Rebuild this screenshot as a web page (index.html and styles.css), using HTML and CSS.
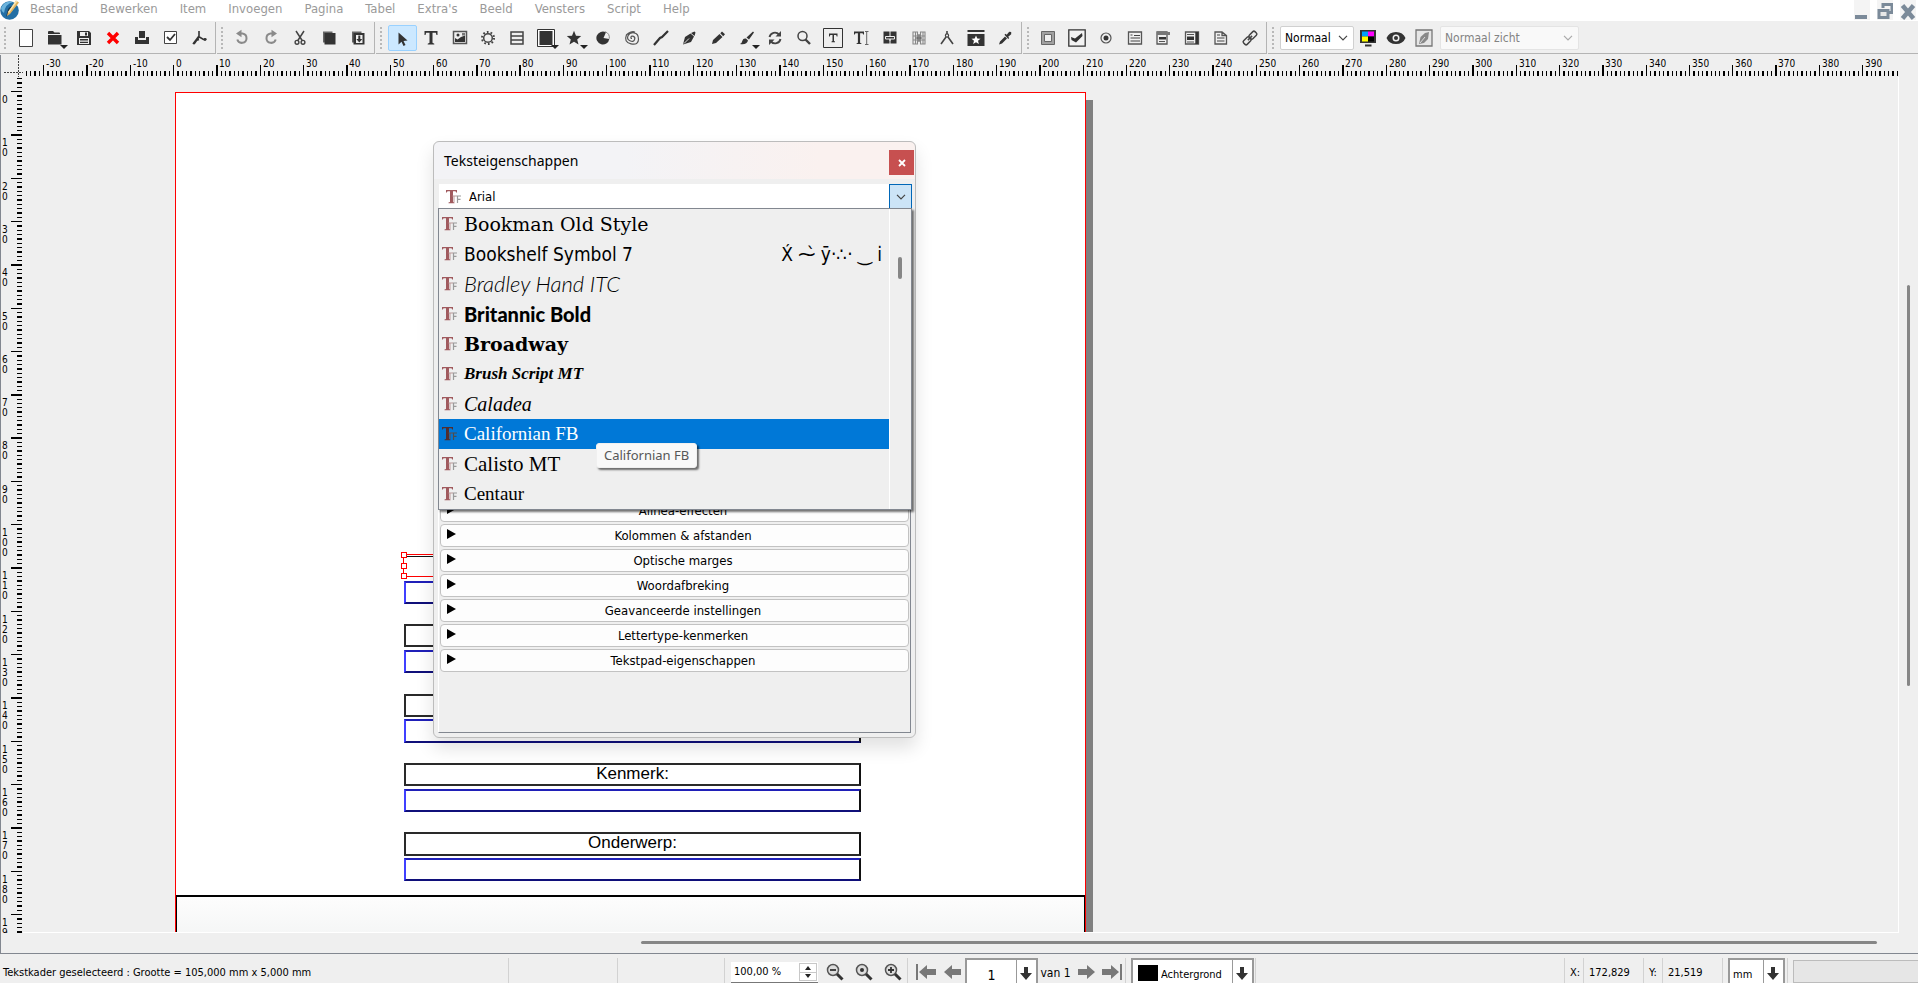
FILE: index.html
```html
<!DOCTYPE html>
<html lang="nl">
<head>
<meta charset="utf-8">
<title>Scribus</title>
<link rel="stylesheet" href="styles.css">
</head>
<body>
<svg class="defs" aria-hidden="true">
  <symbol id="new" viewBox="0 0 18 18"><path d="M2.5.5h13v17h-13z" fill="#fff" stroke="#444"/></symbol>
  <symbol id="open" viewBox="0 0 18 18"><path d="M2 3q0-1 1-1h4l1.500 1.500H13q1 0 1 1V5H2z"/><path d="M2 6h13.500v9.500H2z"/></symbol>
  <symbol id="save" viewBox="0 0 18 18"><path fill-rule="evenodd" d="M2 2h12l2 2v12H2zM5 3v4h8V3zM4 9v6h10V9z"/><path d="M10 3.500h2v3h-2zM5 10h8v1.500H5zM5 12.700h8V14H5z"/></symbol>
  <symbol id="close" viewBox="0 0 18 18"><path d="M4 4l10 10M14 4L4 14" stroke="#f00" stroke-width="3.400"/></symbol>
  <symbol id="print" viewBox="0 0 18 18"><path d="M6 2h6v7H6zM2 8h3v3h8V8h3v7H2z"/></symbol>
  <symbol id="check" viewBox="0 0 18 18"><path d="M2.500 2.500h12v12h-12z" fill="#fff" stroke="#444"/><path d="M5 8l3 3 5-6" fill="none" stroke="#333" stroke-width="1.800"/></symbol>
  <symbol id="pdf" viewBox="0 0 18 18"><path d="M8 2v5L2 15M8 8l-5 7M7.500 7.500l5 3 3-.2M8 10.500l-3 1" fill="none" stroke="#333" stroke-width="1.600"/><circle cx="14" cy="10.500" r="1.400"/></symbol>
  <symbol id="undo" viewBox="0 0 18 18"><path d="M6 4.500h3.500a4.700 4.700 0 1 1-5.200 6" fill="none" stroke="#8a8a8a" stroke-width="2"/><path d="M3 4.500L8.500.8v7.400z" fill="#8a8a8a"/></symbol>
  <symbol id="redo" viewBox="0 0 18 18"><path d="M12 4.500H8.500a4.700 4.700 0 1 0 5.200 6" fill="none" stroke="#8a8a8a" stroke-width="2"/><path d="M15 4.500L9.500.8v7.400z" fill="#8a8a8a"/></symbol>
  <symbol id="cut" viewBox="0 0 18 18"><path d="M5 2l6.500 10M13 2L6.500 12" fill="none" stroke="#444" stroke-width="1.500"/><circle cx="6" cy="13.300" r="1.900" fill="none" stroke="#444" stroke-width="1.400"/><circle cx="12" cy="13.300" r="1.900" fill="none" stroke="#444" stroke-width="1.400"/></symbol>
  <symbol id="copy" viewBox="0 0 18 18"><path d="M3 2.500h9.500v2H5v9H3z" fill="#666"/><path d="M4.500 4h11v11.500h-11z"/></symbol>
  <symbol id="paste" viewBox="0 0 18 18"><path d="M3 2.500h9.500v2H5v9H3z" fill="#666"/><path d="M4.500 4h11v11.500h-11z"/><path d="M7 6h6.500v8H7z" fill="#eee"/><path d="M9.300 6.500h2V10h2l-3 3.500-3-3.500h2z"/></symbol>
  <symbol id="select" viewBox="0 0 18 18"><path d="M5.500 3.500v12l3-2.800 2 4.300 2-1-2-4 4-.4z"/></symbol>
  <symbol id="text" viewBox="0 0 18 18"><path d="M2.500 2h13v4h-1l-.7-2.200h-3.300v10l1.800.9v.8H5.700v-.8l1.800-.9v-10H4.200L3.500 6h-1z"/></symbol>
  <symbol id="image" viewBox="0 0 18 18"><path d="M2.500 2.500h13v12h-13z" fill="none" stroke="#555" stroke-width="1.500"/><path d="M4 13V9l2.500 1.500L10 8l4-1.500V13z"/><circle cx="7" cy="6" r="1.500"/><path d="M11 4h3v2.500h-3z" fill="#777"/></symbol>
  <symbol id="gear" viewBox="0 0 18 18"><circle cx="9" cy="9" r="4.300" fill="none" stroke="#444" stroke-width="1.500"/><circle cx="9" cy="9" r="6" fill="none" stroke="#444" stroke-width="2" stroke-dasharray="1.700 2.070"/></symbol>
  <symbol id="table" viewBox="0 0 18 18"><path d="M3 3h12v12H3zM3 7h12M3 11h12" fill="none" stroke="#444" stroke-width="1.500"/></symbol>
  <symbol id="shape" viewBox="0 0 18 18"><path d="M.5.5h17v17H.5z" fill="#fff" stroke="#333"/><path d="M2.500 2h13v14h-13z"/></symbol>
  <symbol id="star" viewBox="0 0 18 18"><path d="M9 1.800l2 4.900 5.200.4-4 3.400 1.300 5.100L9 12.800l-4.500 2.800 1.300-5.100-4-3.400 5.200-.4z"/></symbol>
  <symbol id="arc" viewBox="0 0 18 18"><path d="M9.500 9L12 3.300A6.500 6.500 0 1 0 15.300 10z"/><path d="M11 2.700a6.500 6.500 0 0 1 4.300 7" fill="none" stroke="#888"/></symbol>
  <symbol id="spiral" viewBox="0 0 18 18"><path d="M9 9.500q-1.500 0-1-1.500t2.500-.6 1 3.400-4.500 1-2-5 6-3 4.500 6.500-7.500 4.500-4.500-9S9 1.500 12 3.200" fill="none" stroke="#555" stroke-width="1.200"/></symbol>
  <symbol id="line" viewBox="0 0 18 18"><path d="M2 16l6-7 2-1 6-6" fill="none" stroke="#333" stroke-width="2.200"/></symbol>
  <symbol id="pen" viewBox="0 0 18 18"><path d="M3 15.500L5 8l5.500-3.500 3.500 3-3 5.500zM11 4l3.500-1.500 1 1-1 3.500z"/><path d="M4 14.500l5-5" stroke="#ddd" fill="none"/></symbol>
  <symbol id="pencil" viewBox="0 0 18 18"><path d="M3 15l1-4 6.500-6 3 3L7 14zM11.300 4.300L13 2.500l3 2.800-1.800 1.900z"/></symbol>
  <symbol id="brush" viewBox="0 0 18 18"><path d="M2 15q2-1 2.500-3.500T8 9.500l2 2Q9 16 2 15zM8.500 8.500l6.500-6 1 1-5 7z"/></symbol>
  <symbol id="rotate" viewBox="0 0 18 18"><path d="M3.500 8A5.500 5.500 0 0 1 13 5.500M14.500 10A5.500 5.500 0 0 1 5 12.500" fill="none" stroke="#444" stroke-width="1.900"/><path d="M15 2v5.500h-5.500zM3 16v-5.500h5.500z" fill="#444"/></symbol>
  <symbol id="zoom" viewBox="0 0 18 18"><circle cx="7.500" cy="7" r="4.500" fill="none" stroke="#444" stroke-width="1.500"/><path d="M10.500 10.500l4.500 4.500" stroke="#444" stroke-width="2.400"/></symbol>
  <symbol id="edit" viewBox="0 0 20 20"><path d="M.5.500h19v19H.5z" fill="none" stroke="#333"/><path d="M6 5.500h8.500v3h-.8l-.5-1.500H11v6l1 .5v.7H8.500v-.7l1-.5V7H7.300l-.5 1.500H6z"/></symbol>
  <symbol id="story" viewBox="0 0 18 18"><path d="M2 2.500h10v3h-.8l-.6-1.300H8.100v9.600l1.400.6v.6h-5v-.6l1.400-.6V4.200H3.400L2.800 5.500H2z"/><path d="M13 2.500h3.500M13 15.500h3.500M14.700 2.500v13" stroke="#666" fill="none"/></symbol>
  <symbol id="link" viewBox="0 0 18 18"><path d="M2.500 2.500h6v12h-6zM9.500 2.500h6v12h-6z"/><path d="M4.500 7.500h9v2.500h-9z" fill="#333" stroke="#eee"/><path d="M8.500 10v2h1v-2z" fill="#eee"/></symbol>
  <symbol id="unlink" viewBox="0 0 18 18"><path d="M3 3h4.500v12H3zM10.500 3H15v12h-4.500zM3 7h12M3 11h12M5.500 3v12M13 3v12" fill="none" stroke="#888" stroke-width="1.100"/><path d="M9 5v8M6 9h6" stroke="#555"/></symbol>
  <symbol id="measure" viewBox="0 0 18 18"><path d="M9 2v3M8 8l-5 7M10 8l5 7" fill="none" stroke="#444" stroke-width="1.600"/><circle cx="9" cy="6.500" r="1.600" fill="none" stroke="#444" stroke-width="1.200"/></symbol>
  <symbol id="props" viewBox="0 0 18 18"><path d="M.5 1h17v2H.5zM.5 5h17v12H.5z"/><path d="M9 6.500l1.300 3 3.200.2-2.500 2 .9 3.300L9 13.200 6.100 15l.9-3.300-2.500-2 3.200-.2z" fill="#fff"/></symbol>
  <symbol id="dropper" viewBox="0 0 18 18"><path d="M3 15.500l1-3 5-5 2 2-5 5zM8.500 5.800l1-1 1.200 1 2.500-3 2 .2 0 2.200-3 2.500 1 1.200-1 1z"/></symbol>
  <symbol id="button" viewBox="0 0 18 18"><path d="M4 4h10v10H4z" fill="none" stroke="#a0a0a0" stroke-width="3"/><path d="M2.500 2.500h13v13h-13zM5.500 5.500h7v7h-7z" fill="none" stroke="#666"/></symbol>
  <symbol id="checkbox" viewBox="0 0 18 18"><path d="M.8.800h16.400v16.400H.8z" fill="#f3f3f3" stroke="#333" stroke-width="1.300"/><path d="M3 8l4 1.500L14 4l.5 3L8 13.500 3.500 11z"/></symbol>
  <symbol id="radio" viewBox="0 0 18 18"><circle cx="9" cy="9" r="5" fill="none" stroke="#555" stroke-width="1.200"/><circle cx="9" cy="9" r="2.500"/></symbol>
  <symbol id="field" viewBox="0 0 18 18"><path d="M2.500 3h13v12h-13z" fill="none" stroke="#555" stroke-width="1.300"/><path d="M4.500 6h2M8 6.500h6M4.500 9h9.500M4.500 12h9.500" stroke="#444" stroke-width="1.200"/></symbol>
  <symbol id="combo" viewBox="0 0 18 18"><path d="M3 3h10v12H3z" fill="none" stroke="#555" stroke-width="1.300"/><path d="M3 3h13v3H3z" fill="#777"/><path d="M5 8h7v2.500H5z"/><path d="M5 12.500h6" stroke="#555"/></symbol>
  <symbol id="list" viewBox="0 0 18 18"><path d="M2.500 3h13v12h-13z" fill="none" stroke="#555" stroke-width="1.300"/><path d="M4 7.500h7V11H4zM12.300 3h3v12h-3z"/><path d="M4 5.500h7M4 13h7" stroke="#555"/></symbol>
  <symbol id="note" viewBox="0 0 18 18"><path d="M3 3h7l4.500 3.500V15H3zM10 3v3.500h4.500" fill="none" stroke="#555" stroke-width="1.300"/><path d="M5 6h3M5 9h7.500M5 12h7.500" stroke="#444" stroke-width="1.200"/></symbol>
  <symbol id="chain" viewBox="0 0 18 18"><g fill="none" stroke="#444" stroke-width="1.500" transform="rotate(-45 9 9)"><rect x="1" y="6.500" width="8" height="5" rx="1.500"/><rect x="9" y="6.500" width="8" height="5" rx="1.500"/><path d="M6 9h6"/></g></symbol>
  <symbol id="cmyk" viewBox="0 0 18 18"><path d="M1 1h16v13H1zM6 15.500h6.500v2H6z"/><path d="M3 2.500h6v5H3z" fill="#00a0ff"/><path d="M9 2.500h6v5H9z" fill="#f0f"/><path d="M3 7.500h6v5H3z" fill="#ff0"/><path d="M9 7.500h6v5H9z" fill="#000"/></symbol>
  <symbol id="eye" viewBox="0 0 20 18"><path fill-rule="evenodd" d="M.5 9Q3 3 10 3t9.500 6Q17 15 10 15T.5 9zM10 5.500a3.500 3.500 0 1 0 0 7 3.500 3.500 0 0 0 0-7z"/><circle cx="10" cy="9" r="2"/></symbol>
  <symbol id="preview" viewBox="0 0 18 18"><path d="M1 1h16v16H1z" fill="#e6e6e6" stroke="#777" stroke-width="1.300"/><path d="M4 15l1.500-7L10 4l4-1-1 7-4 4z" fill="#888"/><path d="M5 14l5-6" stroke="#ddd"/></symbol>
  <symbol id="chevron" viewBox="0 0 10 6"><path d="M1 .800l4 4 4-4" fill="none" stroke="currentColor" stroke-width="1.200"/></symbol>
  <symbol id="down" viewBox="0 0 12 14"><path d="M4 0h4v6h4l-6 7L0 6h4z"/></symbol>
  <symbol id="left" viewBox="0 0 17 14"><path d="M0 7l8-7v4h9v6H8v4z" fill="#787878"/></symbol>
  <symbol id="lens" viewBox="0 0 18 18"><circle cx="7" cy="7" r="5.500" fill="#ddd" stroke="#555" stroke-width="1.500"/><path d="M11 11l5.500 5.500" stroke="#333" stroke-width="3"/></symbol>
  <symbol id="tt" viewBox="0 0 16 16"><path d="M0 1h11v2.500h-.8L9.500 2.200H7V13l1.500.5v.7h-6v-.7L4 13V2.200H1.500L.8 3.500H0z" fill="#a05a5e"/><path d="M6.500 7h4.500M8 7v6" stroke="#b99" stroke-width="1"/><path d="M11.500 14V7H15M11.500 10.300h3" fill="none" stroke="#9a9a9a" stroke-width="1.200"/></symbol>
</svg>

<header class="menubar">
  <svg class="logo" viewBox="0 0 20 20" aria-label="Scribus"><circle cx="9.500" cy="10.500" r="9.300" fill="#236fa5"/><path d="M1 8Q5 0 13 2q-8 2-9 11-3-2-3-5z" fill="#6bb3dc"/><path d="M6 17L8 9q3-4 5-2z" fill="#163952"/><path d="M7 16l1-4L16 .5l3 2L10 14z" fill="#e6b45c"/><path d="M8 12L16 .5l1.300 1L9 13z" fill="#fae6b0"/></svg>
  <nav class="menus">
    <a href="#">Bestand</a><a href="#">Bewerken</a><a href="#">Item</a><a href="#">Invoegen</a><a href="#">Pagina</a><a href="#">Tabel</a><a href="#">Extra's</a><a href="#">Beeld</a><a href="#">Vensters</a><a href="#">Script</a><a href="#">Help</a>
  </nav>
  <div class="winctl">
    <button aria-label="Minimaliseren"><svg viewBox="0 0 16 20"><path d="M1 15h12v4H1z"/></svg></button>
    <button aria-label="Herstellen"><svg viewBox="0 0 16 20"><path d="M6 8V4.500h9v8h-3" fill="none" stroke="#7b8a99" stroke-width="3"/><path d="M2 10.500h9v7H2z" fill="#e8e8e8" stroke="#7b8a99" stroke-width="3"/></svg></button>
    <button aria-label="Sluiten"><svg viewBox="0 0 16 20"><path d="M2.500 5.500l11 13M13.500 5.500l-11 13" stroke="#7b8a99" stroke-width="4.500"/></svg></button>
  </div>
</header>

<div class="toolbars">
  <div class="group g-file">
    <button aria-label="Nieuw"><svg><use href="#new"/></svg></button>
    <button class="drop" aria-label="Openen"><svg><use href="#open"/></svg></button>
    <button aria-label="Opslaan"><svg><use href="#save"/></svg></button>
    <button aria-label="Sluiten"><svg><use href="#close"/></svg></button>
    <button aria-label="Afdrukken"><svg><use href="#print"/></svg></button>
    <button aria-label="Controle"><svg><use href="#check"/></svg></button>
    <button aria-label="PDF"><svg><use href="#pdf"/></svg></button>
  </div>
  <div class="group g-edit">
    <button aria-label="Ongedaan maken"><svg><use href="#undo"/></svg></button>
    <button aria-label="Opnieuw"><svg><use href="#redo"/></svg></button>
    <button aria-label="Knippen"><svg><use href="#cut"/></svg></button>
    <button aria-label="Kopiëren"><svg><use href="#copy"/></svg></button>
    <button aria-label="Plakken"><svg><use href="#paste"/></svg></button>
  </div>
  <div class="group g-tools">
    <button class="on" aria-label="Selecteren"><svg><use href="#select"/></svg></button>
    <button aria-label="Tekstkader"><svg><use href="#text"/></svg></button>
    <button aria-label="Afbeeldingskader"><svg><use href="#image"/></svg></button>
    <button aria-label="Renderkader"><svg><use href="#gear"/></svg></button>
    <button aria-label="Tabel"><svg><use href="#table"/></svg></button>
    <button class="drop" aria-label="Vorm"><svg><use href="#shape"/></svg></button>
    <button class="drop" aria-label="Veelhoek"><svg><use href="#star"/></svg></button>
    <button aria-label="Boog"><svg><use href="#arc"/></svg></button>
    <button aria-label="Spiraal"><svg><use href="#spiral"/></svg></button>
    <button aria-label="Lijn"><svg><use href="#line"/></svg></button>
    <button aria-label="Bézierkromme"><svg><use href="#pen"/></svg></button>
    <button aria-label="Vrije lijn"><svg><use href="#pencil"/></svg></button>
    <button class="drop" aria-label="Kalligrafie"><svg><use href="#brush"/></svg></button>
    <button aria-label="Draaien"><svg><use href="#rotate"/></svg></button>
    <button aria-label="Zoomen"><svg><use href="#zoom"/></svg></button>
    <button class="big" aria-label="Inhoud bewerken"><svg><use href="#edit"/></svg></button>
    <button aria-label="Verhaaleditor"><svg><use href="#story"/></svg></button>
    <button aria-label="Kaders koppelen"><svg><use href="#link"/></svg></button>
    <button aria-label="Kaders ontkoppelen"><svg><use href="#unlink"/></svg></button>
    <button aria-label="Meten"><svg><use href="#measure"/></svg></button>
    <button aria-label="Eigenschappen kopiëren"><svg><use href="#props"/></svg></button>
    <button aria-label="Pipet"><svg><use href="#dropper"/></svg></button>
  </div>
  <div class="group g-pdf">
    <button aria-label="PDF-knop"><svg><use href="#button"/></svg></button>
    <button aria-label="PDF-selectievakje"><svg><use href="#checkbox"/></svg></button>
    <button aria-label="PDF-keuzerondje"><svg><use href="#radio"/></svg></button>
    <button aria-label="PDF-tekstveld"><svg><use href="#field"/></svg></button>
    <button aria-label="PDF-keuzelijst"><svg><use href="#combo"/></svg></button>
    <button aria-label="PDF-lijst"><svg><use href="#list"/></svg></button>
    <button aria-label="Tekstaantekening"><svg><use href="#note"/></svg></button>
    <button aria-label="Koppeling"><svg><use href="#chain"/></svg></button>
  </div>
  <div class="group g-view">
    <label class="pick pick-quality"><select aria-label="Voorbeeldkwaliteit"><option>Normaal</option></select><svg><use href="#chevron"/></svg></label>
    <button aria-label="Kleurbeheer"><svg><use href="#cmyk"/></svg></button>
    <button class="big" aria-label="Voorbeeldmodus"><svg><use href="#eye"/></svg></button>
    <button aria-label="Bewerken in voorbeeld"><svg><use href="#preview"/></svg></button>
    <label class="pick pick-vision"><select aria-label="Zicht" disabled><option>Normaal zicht</option></select><svg><use href="#chevron"/></svg></label>
  </div>
</div>

<main class="workspace">
  <div class="corner"></div>
  <svg class="ruler ruler-h" id="ruler-h"></svg>
  <svg class="ruler ruler-v" id="ruler-v"></svg>
  <section class="canvas">
    <div class="page-shadow"></div>
    <div class="page"></div>
    <div class="picture-frame"></div>
    <div class="frame selected f1"><i></i><i></i><i></i></div>
    <div class="frame linked f2"></div>
    <div class="frame f3"></div>
    <div class="frame linked f4"></div>
    <div class="frame f5"></div>
    <div class="frame linked f6"></div>
    <div class="frame f7">Kenmerk:</div>
    <div class="frame linked f8"></div>
    <div class="frame f9">Onderwerp:</div>
    <div class="frame linked f10"></div>
  </section>
  <div class="vscroll"><div></div></div>
  <div class="hscroll"><div></div></div>
</main>

<section class="dialog" role="dialog" aria-labelledby="dlg-title">
  <div class="titlebar"><h1 id="dlg-title">Teksteigenschappen</h1><button aria-label="Sluiten"><svg viewBox="0 0 8 8"><path d="M1 1l6 6M7 1L1 7" stroke="#fff" stroke-width="1.800"/></svg></button></div>
  <div class="fontbox">
    <svg class="tt"><use href="#tt"/></svg>
    <input value="Arial" aria-label="Lettertype">
    <button aria-label="Lijst"><svg><use href="#chevron"/></svg></button>
    <div class="popup">
      <ul role="listbox" aria-label="Lettertypen">
        <li class="bookman"><svg class="tt"><use href="#tt"/></svg>Bookman Old Style</li>
        <li class="bookshelf"><svg class="tt"><use href="#tt"/></svg>Bookshelf Symbol 7<span>X́ ⁓̀ ȳ·∴· ‿ i̇</span></li>
        <li class="bradley"><svg class="tt"><use href="#tt"/></svg>Bradley Hand ITC</li>
        <li class="britannic"><svg class="tt"><use href="#tt"/></svg>Britannic Bold</li>
        <li class="broadway"><svg class="tt"><use href="#tt"/></svg>Broadway</li>
        <li class="brush"><svg class="tt"><use href="#tt"/></svg>Brush Script MT</li>
        <li class="caladea"><svg class="tt"><use href="#tt"/></svg>Caladea</li>
        <li class="californian active"><svg class="tt"><use href="#tt"/></svg>Californian FB</li>
        <li class="calisto"><svg class="tt"><use href="#tt"/></svg>Calisto MT</li>
        <li class="centaur"><svg class="tt"><use href="#tt"/></svg>Centaur</li>
      </ul>
      <div class="list-scroll"><div></div></div>
      <div class="tooltip" role="tooltip">Californian FB</div>
    </div>
  </div>
  <div class="panel">
    <button>Alinea-effecten</button>
    <button>Kolommen &amp; afstanden</button>
    <button>Optische marges</button>
    <button>Woordafbreking</button>
    <button>Geavanceerde instellingen</button>
    <button>Lettertype-kenmerken</button>
    <button>Tekstpad-eigenschappen</button>
  </div>
</section>

<footer class="statusbar">
  <div class="cell message">Tekstkader geselecteerd : Grootte = 105,000 mm x 5,000 mm</div>
  <div class="cell blank-a"></div>
  <div class="cell blank-b"></div>
  <div class="cell zoomcell">
    <div class="spin"><input value="100,00 %" aria-label="Zoom"><div class="steps"><button aria-label="Meer"></button><button aria-label="Minder"></button></div></div>
    <button aria-label="Uitzoomen"><svg viewBox="0 0 18 18"><use href="#lens"/><path d="M4 7h6" stroke="#333" stroke-width="1.800"/></svg></button>
    <button aria-label="100%"><svg viewBox="0 0 18 18"><use href="#lens"/><circle cx="7" cy="7" r="2"/></svg></button>
    <button aria-label="Inzoomen"><svg viewBox="0 0 18 18"><use href="#lens"/><path d="M4 7h6M7 4v6" stroke="#333" stroke-width="1.800"/></svg></button>
  </div>
  <div class="cell pages">
    <button aria-label="Eerste pagina"><svg class="first" viewBox="0 0 20 16"><path d="M0 0h2v16H0z" fill="#787878"/><use href="#left" x="3" y="1" width="17" height="14"/></svg></button>
    <button aria-label="Vorige pagina"><svg class="arrow"><use href="#left"/></svg></button>
    <label class="box box-page"><select aria-label="Pagina"><option>1</option></select><span><svg><use href="#down"/></svg></span></label>
    <span class="of">van 1</span>
    <button aria-label="Volgende pagina"><svg class="arrow flip"><use href="#left"/></svg></button>
    <button aria-label="Laatste pagina"><svg class="first flip" viewBox="0 0 20 16"><path d="M0 0h2v16H0z" fill="#787878"/><use href="#left" x="3" y="1" width="17" height="14"/></svg></button>
  </div>
  <div class="cell layers">
    <label class="box box-layer"><b></b><select aria-label="Laag"><option>Achtergrond</option></select><span><svg><use href="#down"/></svg></span></label>
  </div>
  <div class="cell filler"></div>
  <div class="cell axis">X:</div>
  <div class="cell value">172,829</div>
  <div class="cell axis">Y:</div>
  <div class="cell value">21,519</div>
  <div class="cell units"><label class="box box-unit"><select aria-label="Eenheid"><option>mm</option></select><span><svg><use href="#down"/></svg></span></label></div>
  <div class="progress"></div>
</footer>
<script src="rulers.js"></script>
</body>
</html>
```
FILE: styles.css
```css
* { box-sizing: border-box; }
body {
  margin: 0;
  height: 100vh;
  display: flex;
  flex-direction: column;
  overflow: hidden;
  background: #efefef;
  color: #000;
  font: 12px/16px "DejaVu Sans Condensed", "Noto Sans", sans-serif;
}
button, input, select { font: inherit; color: inherit; border: 0; padding: 0; margin: 0; background: none; border-radius: 0; }
select { appearance: none; opacity: 1; }
svg { display: block; fill: #333; }
.defs { display: none; }

/* menu bar */
.menubar { flex: none; display: flex; height: 21px; background: #fff; }
.logo { width: 20px; height: 20px; }
.menus { flex: 1; display: flex; gap: 22px; padding-left: 10px; font-size: 13px; line-height: 18px; }
.menus a { color: #9a9a9a; text-decoration: none; }
.winctl { display: flex; gap: 7px; padding-right: 2px; }
.winctl button { width: 16px; height: 20px; background: #f4f4f4; }
.winctl svg { width: 16px; height: 20px; fill: #7b8a99; }

/* tool bars */
.toolbars { flex: none; display: flex; height: 33px; padding-top: 1px; }
.group {
  position: relative;
  display: flex;
  align-items: center;
  padding-left: 10px;
  border-bottom: 1px solid #b4b4b4;
  border-right: 1px solid #b4b4b4;
  margin-right: 1px;
}
.group::before {
  content: "";
  position: absolute;
  left: 4px;
  top: 5px;
  bottom: 4px;
  border-left: 2px dotted #b8b8b8;
}
.group button { flex: 1; height: 26px; display: flex; align-items: center; justify-content: center; border: 1px solid transparent; border-radius: 2px; position: relative; }
.group button svg { width: 18px; height: 18px; flex: none; }
.group .big svg { width: 20px; height: 20px; }
.group .on { background: #cce8ff; border-color: #99d1ff; }
.group .drop::after { content: ""; position: absolute; right: 0; bottom: 1px; border: 4px solid transparent; border-top-color: #222; border-bottom: 0; }
.g-file { width: 216px; padding-left: 11px; }
.g-edit { width: 158px; padding-right: 1px; }
.g-tools { width: 646px; padding: 0 2px 0 12px; }
.g-pdf { width: 244px; padding: 0 2px 0 11px; }
.g-view { flex: 1; padding-left: 12px; margin-right: 0; border-right: 0; }
.g-view button { flex: none; width: 28px; }
.pick { display: flex; align-items: center; height: 24px; background: #fff; border: 1px solid #d0d0d0; border-radius: 2px; padding: 0 5px 0 4px; }
.pick select { flex: 1; min-width: 0; }
.pick svg { width: 10px; height: 6px; color: #444; }
.pick-quality { width: 74px; }
.pick-vision { width: 139px; margin-left: 2px; background: #f9f9f9; border-color: #e4e4e4; color: #838383; }
.pick-vision svg { color: #aaa; }

/* rulers, canvas and scroll bars */
.workspace {
  flex: 1;
  min-height: 0;
  display: grid;
  grid-template-columns: 22px 1fr 19px;
  grid-template-rows: 22px 1fr 20px;
  margin-top: 1px;
  border-left: 1px solid #828790;
  border-bottom: 1px solid #828790;
}
.corner {
  background: repeating-linear-gradient(#444 0 2px, transparent 2px 3px) 17px 0 / 1px 100% no-repeat, repeating-linear-gradient(90deg, #444 0 2px, transparent 2px 3px) 3px 17px / 100% 1px no-repeat;
}
.ruler { width: 100%; height: 100%; overflow: hidden; fill: #000; shape-rendering: crispEdges; font-size: 10px; }
.ruler-v { grid-row: 2; grid-column: 1; }
.canvas { grid-row: 2; grid-column: 2; position: relative; overflow: hidden; border-right: 1px solid #fff; border-bottom: 1px solid #fff; }
.vscroll { grid-column: 3; grid-row: 1 / 4; padding: 230px 0 0 8px; }
.vscroll div { width: 3px; height: 401px; border-radius: 2px; background: #868686; }
.hscroll { grid-column: 1 / 3; padding: 8px 22px 0 640px; grid-row: 3; }
.hscroll div { height: 3px; border-radius: 2px; background: #868686; }
.page { position: absolute; left: 152px; top: 15px; width: 911px; height: 1288px; background: #fff; border: 1px solid #f00; }
.page-shadow { position: absolute; left: 160px; top: 23px; width: 910px; height: 1288px; background: #808080; }
.picture-frame { position: absolute; left: 153px; top: 818px; width: 909px; height: 460px; border: 1px solid #000; border-top-width: 2px; background: linear-gradient(#fdfdfd, #f5f6f6 37px); }
.frame {
  position: absolute;
  left: 381px;
  width: 457px;
  height: 23px;
  border: 2px solid #2a2a2a;
  border-right-color: #111;
  text-align: center;
  font: 17px/17px "Liberation Sans", Arial, sans-serif;
}
.linked { border-color: #2020b8 #111 #10107a #4040ff; }
.f1 { top: 477px; }
.f2 { top: 504px; }
.f3 { top: 547px; }
.f4 { top: 573px; }
.f5 { top: 617px; }
.f6 { top: 642px; height: 24px; }
.f7 { top: 686px; }
.f8 { top: 712px; }
.f9 { top: 755px; height: 24px; }
.f10 { top: 781px; }
.selected { border: 1px solid #f00; left: 380px; box-shadow: inset 0 1px #fff, inset 0 2px #111; }
.selected i { position: absolute; left: -3px; width: 6px; height: 6px; border: 1px solid #f00; background: #fff; }
.selected i:nth-child(1) { top: -3px; }
.selected i:nth-child(2) { top: 8px; }
.selected i:nth-child(3) { bottom: -3px; }

/* text properties window */
.dialog {
  position: absolute;
  left: 433px;
  top: 141px;
  width: 483px;
  height: 597px;
  display: flex;
  flex-direction: column;
  padding: 0 4px 4px;
  border: 1px solid #bcbcbc;
  border-radius: 6px;
  background: #efefef linear-gradient(90deg, #f3f3f6 40%, #faf1ef 80%) no-repeat 0 0 / 100% 37px;
  box-shadow: 0 10px 18px rgba(0, 0, 0, .12);
}
.titlebar { flex: none; height: 42px; display: flex; justify-content: space-between; padding: 8px 0 0 6px; margin-right: -3px; }
.titlebar h1 { margin: 0; font: 14px/22px "Noto Sans", sans-serif; }
.titlebar button { width: 25px; height: 25px; background: #c75050; display: grid; place-items: center; }
.titlebar svg { width: 8px; height: 8px; }
.fontbox { position: relative; flex: none; height: 25px; display: flex; align-items: center; background: #fff; margin: 0 -1px 0 1px; padding-left: 7px; }
.tt { width: 16px; height: 16px; flex: none; }
.fontbox input { flex: 1; padding-left: 7px; outline: 0; font-size: 13px; min-width: 0; }
.fontbox > button { width: 23px; height: 25px; border: 1px solid #0067b8; background: #cce4f7; display: grid; place-items: center; color: #444; }
.fontbox > button svg { width: 10px; height: 6px; }
.popup { position: absolute; z-index: 1; left: -1px; right: 0; top: 24px; display: flex; border: 1px solid #828790; background: #efefef; box-shadow: 2px 2px 2px rgba(0, 0, 0, .55); }
.popup ul { flex: 1; margin: 0; padding: 0; list-style: none; }
.popup li { height: 30px; display: flex; align-items: center; gap: 6px; padding: 0 7px 0 3px; white-space: nowrap; font-size: 20px; line-height: 30px; }
.popup li span { margin-left: auto; }
.popup .active { background: #0078d7; color: #fff; }
.active .tt { filter: brightness(.5); }
.list-scroll { width: 22px; border-left: 1px solid #fff; padding: 48px 0 0 8px; }
.list-scroll div { width: 4px; height: 22px; border-radius: 2px; background: #868686; }
.popup .bookman { font-family: "DejaVu Serif", serif; font-size: 19px; font-weight: 300; }
.popup .bookshelf { font-size: 19px; }
.popup .bradley { font: italic 300 22px/30px Lato, sans-serif; }
.popup .britannic { font: 900 20px/30px Lato, sans-serif; }
.popup .broadway { font: bold 19px/30px "DejaVu Serif", serif; }
.popup .brush { font: italic bold 17px/30px "Liberation Serif", serif; }
.popup .caladea { font: italic 20px/30px "Liberation Serif", serif; }
.popup .californian, .popup .centaur { font: 19px/30px "Liberation Serif", serif; }
.popup .calisto { font: 21px/30px "Liberation Serif", serif; }
.tooltip { position: absolute; left: 157px; top: 234px; padding: 2px 7px 3px; border: 1px solid #f0f0f0; border-radius: 3px; background: #f9f9f9; color: #575757; font: 13px/18px "Noto Sans", sans-serif; box-shadow: 2px 2px 2px rgba(0, 0, 0, .55); }
.panel { flex: 1; min-height: 0; display: flex; flex-direction: column; justify-content: flex-end; gap: 2px; padding: 0 1px 60px; border: solid #828790; border-width: 0 1px 1px 0; border-left: 1px solid #fff; }
.panel button { position: relative; height: 23px; background: #fdfdfd; border: 1px solid #c2c2c2; border-radius: 4px; padding-left: 17px; font-size: 13px; line-height: 20px; }
.panel button::before { content: ""; position: absolute; left: 6px; top: 4px; border: 5px solid transparent; border-left: 9px solid #000; border-right: 0; }

/* status bar */
.statusbar { flex: none; height: 29px; display: flex; overflow: hidden; padding-top: 4px; font-size: 11px; line-height: 30px; white-space: nowrap; }
.cell { flex: none; display: flex; height: 34px; border-right: 1px solid #d2d2d2; }
.message { width: 509px; padding-left: 3px; }
.blank-a { width: 109px; }
.blank-b { width: 107px; }
.zoomcell { width: 183px; padding-left: 6px; }
.zoomcell > button, .pages > button { width: 29px; height: 28px; display: grid; place-items: center; }
.zoomcell > button svg { width: 18px; height: 18px; }
.spin { display: flex; width: 87px; height: 21px; margin: 4px 3px 0 0; background: #fff; border-bottom: 1px solid #777; }
.spin input { flex: 1; min-width: 0; padding-left: 3px; }
.steps { width: 18px; display: flex; flex-direction: column; border: 1px solid #c8c8c8; margin: 1px; }
.steps button { flex: 1; display: grid; place-items: center; }
.steps button::before { content: ""; border: 3px solid transparent; border-bottom: 4px solid #222; border-top: 0; }
.steps button + button { border-top: 1px solid #c8c8c8; }
.steps button + button::before { border-top: 4px solid #222; border-bottom: 0; }
.pages { width: 218px; padding-left: 5px; }
.pages > button { width: 26px; }
.pages .first { width: 20px; height: 16px; }
.arrow { width: 17px; height: 14px; }
.flip { transform: scaleX(-1); }
.of { flex: 1; text-align: center; font-size: 12px; }
.box { flex: none; display: flex; height: 34px; background: #fff; border: 2px solid #999; }
.box select { flex: 1; min-width: 0; height: 28px; }
.box span { width: 20px; padding: 7px 0 0 3px; border-left: 1px solid #999; }
.box span svg { width: 12px; height: 14px; }
.box b { width: 20px; height: 16px; margin: 5px 3px 0 5px; background: #000; }
.box-page { width: 73px; }
.box-page select { text-align: center; text-align-last: center; font-size: 14px; }
.layers { width: 130px; padding-left: 5px; }
.box-layer { width: 123px; }
.filler { flex: 1; }
.axis { width: 19px; padding-left: 5px; }
.value { width: 60px; padding-left: 5px; }
.units { width: 65px; padding-left: 5px; }
.box-unit { width: 57px; }
.box-unit select { padding-left: 3px; }
.progress { flex: none; width: 125px; height: 23px; margin: 2px 0 0 5px; background: #e6e6e6; border: 1px solid #bcbcbc; border-right: 0; }
```
FILE: rulers.js
```js
const STEP = 4.331;            // pixels per millimetre
const ORIGIN = { h: 150, v: 14 };  // position of 0 mm in each ruler

function rect(x, y, w, h) {
  return `<rect x="${x}" y="${y}" width="${w}" height="${h}"/>`;
}

function drawHorizontal(el) {
  const width = el.clientWidth;
  let out = '';
  for (let mm = -34; ORIGIN.h + mm * STEP < width - 1; mm++) {
    const x = ORIGIN.h + mm * STEP;
    const major = mm % 10 === 0;
    out += major ? rect(x, 10, 1.33, 11) : rect(x, 16, 1.33, 5);
    if (major) out += `<text x="${Math.round(x) + 3}" y="12">${mm}</text>`;
  }
  el.innerHTML = out;
}

function drawVertical(el) {
  const height = el.clientHeight;
  let out = '';
  for (let mm = -3; ORIGIN.v + mm * STEP < height; mm++) {
    const y = ORIGIN.v + mm * STEP;
    const major = mm % 10 === 0;
    out += major ? rect(10, y, 11, 1.33) : rect(16, y, 5, 1.33);
    if (major) {
      [...String(mm)].forEach((d, i) => {
        const base = Math.round(y) + 12 + i * 10;
        if (base - 8 < height) out += `<text x="1" y="${base}">${d}</text>`;
      });
    }
  }
  el.innerHTML = out;
}

function draw() {
  drawHorizontal(document.getElementById('ruler-h'));
  drawVertical(document.getElementById('ruler-v'));
}

draw();
window.addEventListener('resize', draw);
```
